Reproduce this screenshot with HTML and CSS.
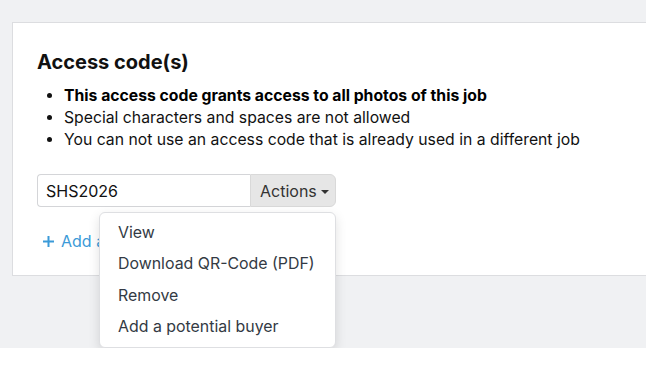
FILE: index.html
```html
<!DOCTYPE html>
<html lang="en">
<head>
<meta charset="utf-8">
<link rel="stylesheet" href="styles.css">
</head>
<body>
<div class="page">
  <section class="card">
    <h2 class="title">Access code(s)</h2>
    <ul class="rules">
      <li><strong>This access code grants access to all photos of this job</strong></li>
      <li>Special characters and spaces are not allowed</li>
      <li>You can not use an access code that is already used in a different job</li>
    </ul>
    <div class="code-row">
      <div class="input-group">
        <input class="code-input" type="text" value="SHS2026">
        <button class="actions-btn" type="button">Actions <span class="caret"></span></button>
        <div class="menu">
          <a class="menu-item">View</a>
          <a class="menu-item">Download QR-Code (PDF)</a>
          <a class="menu-item">Remove</a>
          <a class="menu-item">Add a potential buyer</a>
        </div>
      </div>
    </div>
    <a class="add-link"><svg class="plus" width="13" height="13" viewBox="0 0 13 13"><path d="M6.5 1v11M1 6.5h11" stroke="#3b9ad8" stroke-width="2" fill="none"/></svg>Add a</a>
  </section>
</div>
</body>
</html>
```
FILE: styles.css
```css
* { box-sizing: border-box; }
html, body { margin: 0; padding: 0; background: #ffffff; }
body {
  font-family: Inter, "Noto Sans", sans-serif;
  color: #111;
}
.page {
  background: #f0f1f3;
  height: 348px;
  padding: 22px 0 0 12px;
}
.card {
  background: #ffffff;
  border: 1px solid #dcdde0;
  border-right: none;
  height: 254px;
  padding: 26px 24px 0 24px;
}
.title {
  margin: 0;
  font-size: 20px;
  font-weight: 700;
  line-height: 26px;
  color: #111;
}
.rules {
  margin: 10px 0 0 0;
  padding-left: 27px;
  font-size: 15.75px;
  line-height: 22px;
  color: #111;
}
.rules strong { font-weight: 700; color: #000; }
.code-row {
  margin-top: 23px;
  display: flex;
}
.input-group {
  position: relative;
  display: flex;
  height: 33px;
}
.code-input {
  width: 213px;
  height: 33px;
  border: 1px solid #d4d5d8;
  border-right: none;
  border-radius: 4px 0 0 4px;
  padding: 0 8px;
  font-family: inherit;
  font-size: 16px;
  color: #111;
  outline: none;
}
.actions-btn {
  height: 33px;
  width: 86px;
  border: 1px solid #d9d9d9;
  border-radius: 0 6px 6px 0;
  background: #e6e6e6;
  font-family: inherit;
  font-size: 16px;
  color: #333;
  padding: 0 6px 0 9px;
  display: flex;
  align-items: center;
  gap: 4px;
}
.caret {
  display: inline-block;
  width: 0; height: 0;
  border-left: 4px solid transparent;
  border-right: 4px solid transparent;
  border-top: 4px solid #333;
  margin-top: 3px;
}
.menu {
  position: absolute;
  top: 38px;
  left: 62px;
  width: 237px;
  background: #fff;
  border: 1px solid #dedfe2;
  border-radius: 6px;
  box-shadow: 0 4px 12px rgba(0,0,0,0.12);
  padding: 4px 0 5px;
  display: flex;
  flex-direction: column;
  z-index: 10;
}
.menu-item {
  display: block;
  padding: 0 18px;
  height: 31.3px;
  line-height: 31.3px;
  font-size: 15.9px;
  color: #333a44;
}
.add-link {
  display: inline-flex;
  align-items: center;
  gap: 6px;
  margin-top: 24px;
  margin-left: 5px;
  font-size: 16px;
  color: #3b9ad8;
}
.plus { display: block; }
```
